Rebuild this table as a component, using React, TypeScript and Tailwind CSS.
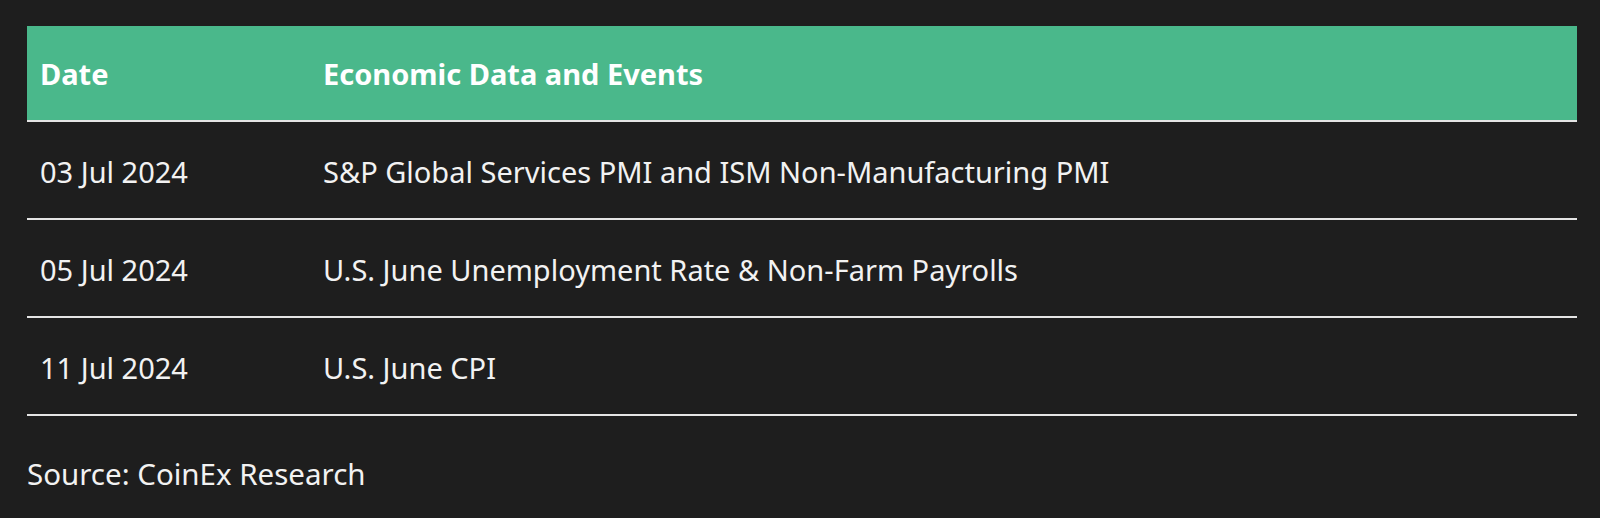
const rows = [
  { date: "03 Jul 2024", event: "S&P Global Services PMI and ISM Non-Manufacturing PMI" },
  { date: "05 Jul 2024", event: "U.S. June Unemployment Rate & Non-Farm Payrolls" },
  { date: "11 Jul 2024", event: "U.S. June CPI" },
];

export default function App() {
  return (
    <div className="min-h-screen bg-[#1e1e1e] pl-[27px] pt-[26px] font-['Noto_Sans',sans-serif] text-[#f2f2f2]">
      <div className="w-[1550px]">
        {/* Header */}
        <div className="grid h-[96px] grid-cols-[283px_1fr] items-center border-b-2 border-[#e4e4e4] bg-[#4ab88b] text-[29px] leading-none font-bold text-white">
          <div className="pl-[13px]">Date</div>
          <div className="pl-[13px]">Economic Data and Events</div>
        </div>

        {rows.map((row) => (
          <div
            key={row.date}
            className="grid h-[98px] grid-cols-[283px_1fr] items-center border-b-2 border-[#e4e4e4] pt-[2px] text-[29px] leading-none"
          >
            <div className="pl-[13px]">{row.date}</div>
            <div className="pl-[13px]">{row.event}</div>
          </div>
        ))}
      </div>

      <p className="mt-[43px] text-[29.5px] leading-none">Source: CoinEx Research</p>
    </div>
  );
}
